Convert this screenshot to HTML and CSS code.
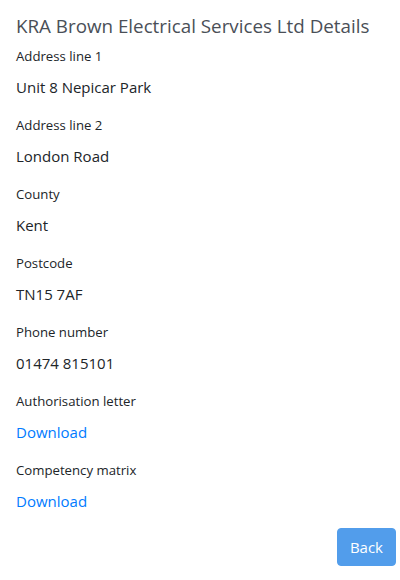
FILE: index.html
```html
<!DOCTYPE html>
<html>
<head>
<meta charset="utf-8">
<link rel="stylesheet" href="styles.css">
</head>
<body>
<div class="page">
  <h4 class="title">KRA Brown Electrical Services Ltd Details</h4>
  <div class="field">
    <div class="label">Address line 1</div>
    <div class="value">Unit 8 Nepicar Park</div>
  </div>
  <div class="field">
    <div class="label">Address line 2</div>
    <div class="value">London Road</div>
  </div>
  <div class="field">
    <div class="label">County</div>
    <div class="value">Kent</div>
  </div>
  <div class="field">
    <div class="label">Postcode</div>
    <div class="value">TN15 7AF</div>
  </div>
  <div class="field">
    <div class="label">Phone number</div>
    <div class="value">01474 815101</div>
  </div>
  <div class="field">
    <div class="label">Authorisation letter</div>
    <div class="value"><a class="link" href="#">Download</a></div>
  </div>
  <div class="field">
    <div class="label">Competency matrix</div>
    <div class="value"><a class="link" href="#">Download</a></div>
  </div>
  <div class="actions">
    <button class="btn">Back</button>
  </div>
</div>
</body>
</html>
```
FILE: styles.css
```css
html, body {
  margin: 0;
  padding: 0;
  background: #fff;
}
body {
  font-family: "Open Sans", "Noto Sans", sans-serif;
  color: #212529;
}
.page {
  padding: 14px 4px 0 16px;
  display: flex;
  flex-direction: column;
}
.title {
  margin: 0 0 7px 0;
  font-size: 18.8px;
  font-weight: 400;
  line-height: 24px;
  color: #4a4f57;
}
.field {
  display: flex;
  flex-direction: column;
}
.label {
  font-size: 13.2px;
  line-height: 21px;
  padding-top: 1px;
  margin-bottom: 7px;
}
.value {
  font-size: 15px;
  line-height: 24px;
  padding-top: 1px;
  margin-bottom: 15px;
}
.link {
  color: #007bff;
  text-decoration: none;
}
.actions {
  display: flex;
  justify-content: flex-end;
}
.btn {
  font-family: inherit;
  font-size: 15px;
  line-height: 24px;
  padding: 6px 12px;
  border: 1px solid #529deb;
  border-radius: 4px;
  background: #529deb;
  color: #fff;
}
```
